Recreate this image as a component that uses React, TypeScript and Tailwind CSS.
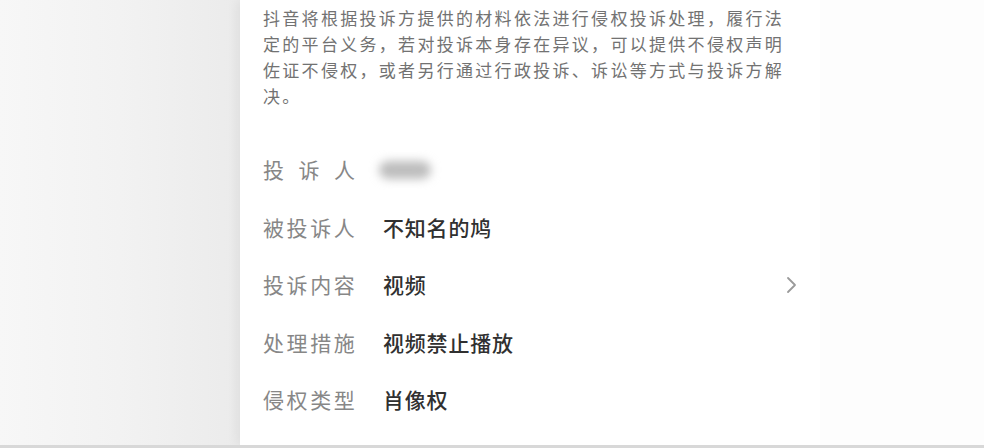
import React from "react";

const rows = [
  { label: "被投诉人", value: "不知名的鸠" },
  { label: "投诉内容", value: "视频", arrow: true },
  { label: "处理措施", value: "视频禁止播放" },
  { label: "侵权类型", value: "肖像权" },
];

const lines = [
  "抖音将根据投诉方提供的材料依法进行侵权投诉处理，履行法",
  "定的平台义务，若对投诉本身存在异议，可以提供不侵权声明",
  "佐证不侵权，或者另行通过行政投诉、诉讼等方式与投诉方解",
  "决。",
];

const App = () => {
  return (
    <div className="flex flex-col w-[984px] h-[448px] overflow-hidden bg-[#fcfcfc]" style={{ fontFamily: '"Noto Sans CJK SC", "Noto Sans", sans-serif' }}>
      <div className="flex flex-1">
        <div className="w-[240px] bg-gradient-to-r from-[#f7f7f7] via-[#f2f2f2] to-[#ebebeb]" />
        <div className="w-[580px] bg-white px-[23px] pt-[5px] shadow-[-4px_0_10px_rgba(0,0,0,0.05)]">
          <div className="text-[17px] leading-[26px] tracking-[2.3px] text-[#727272]">
            {lines.map((l) => (
              <div key={l} className="whitespace-nowrap">{l}</div>
            ))}
          </div>
          <div className="mt-[32px]">
            <div className="flex items-center h-[57.5px]">
              <div className="flex justify-between w-[92px] text-[21px] text-[#878787]">
                <span>投</span><span>诉</span><span>人</span>
              </div>
              <div className="ml-[24px] w-[52px] h-[18px] rounded-full bg-[#bdbdbd] blur-[5px]" />
            </div>
            {rows.map((r) => (
              <div key={r.label} className="flex items-center h-[57.5px]">
                <div className="w-[92px] text-[21px] tracking-[2.6px] text-[#878787] whitespace-nowrap">{r.label}</div>
                <div className="ml-[28px] flex-1 text-[21px] tracking-[0.8px] font-medium text-[#303030]">{r.value}</div>
                {r.arrow && (
                  <svg width="16" height="20" viewBox="0 0 16 20" className="-mr-[2px]">
                    <path d="M5 3 L12 10 L5 17" fill="none" stroke="#9a9a9a" strokeWidth="1.8" strokeLinecap="round" strokeLinejoin="round" />
                  </svg>
                )}
              </div>
            ))}
          </div>
        </div>
        <div className="flex-1 bg-[#fdfdfd]" />
      </div>
      <div className="h-[3px] bg-[#d8d8d8]" />
    </div>
  );
};

export default App;
